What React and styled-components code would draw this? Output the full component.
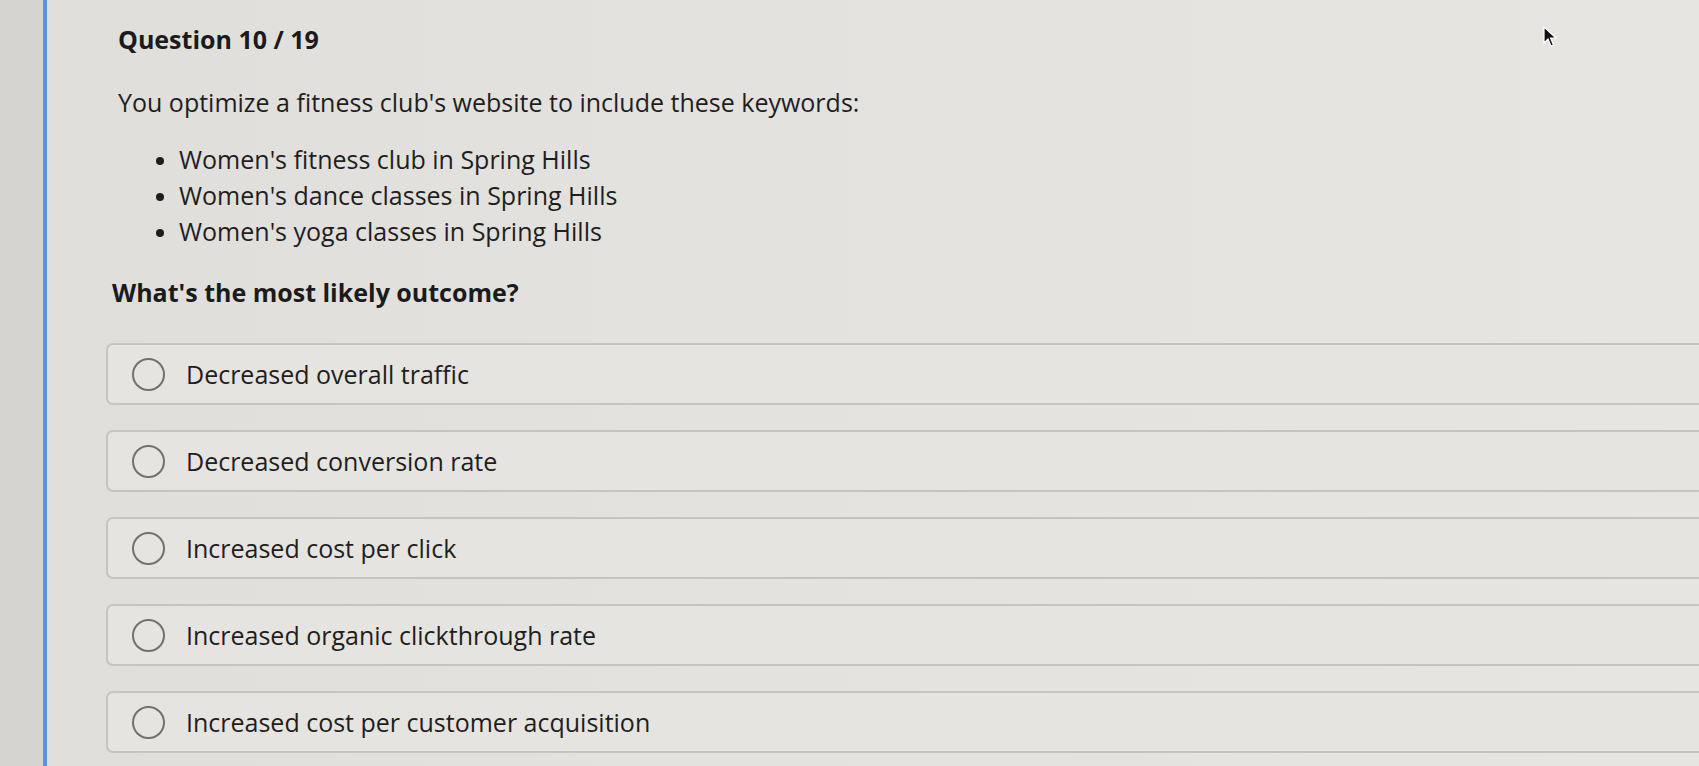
import styled, { createGlobalStyle } from "styled-components";

const GlobalStyle = createGlobalStyle`
  html, body {
    margin: 0;
    padding: 0;
    background: #e3e1dd;
    overflow: hidden;
  }
  body {
    font-family: "Open Sans", "Noto Sans", sans-serif;
    color: #1e1e1e;
  }
`

const Page = styled.div`
  position: relative;
  display: flex;
  width: 1699px;
  height: 766px;
  background: linear-gradient(90deg, #e0deda 0%, #e4e2de 40%, #e7e5e1 100%);
  overflow: hidden;
`

const SideStrip = styled.div`
  width: 43px;
  flex-shrink: 0;
  background: #d6d4d0;
  border-right: 4px solid #6190d4;
`

const Content = styled.main`
  flex: 1;
  padding: 22px 0 0 71px;
`

const Title = styled.h1`
  margin: 0;
  font-size: 25px;
  line-height: 34px;
  font-weight: 700;
  color: #1b1b1b;
`

const Prompt = styled.p`
  margin: 29px 0 0 0;
  font-size: 25px;
  line-height: 34px;
  font-weight: 400;
`

const Keywords = styled.ul`
  margin: 22px 0 0 0;
  padding: 0 0 0 61px;
  font-size: 25px;
  line-height: 36px;

  li::marker {
    font-size: 22px;
  }
`

const Ask = styled.p`
  margin: 26px 0 0 -6px;
  font-size: 25px;
  line-height: 34px;
  font-weight: 700;
  color: #1b1b1b;
`

const Options = styled.div`
  display: flex;
  flex-direction: column;
  gap: 25px;
  margin: 34px -40px 0 -12px;
`

const Option = styled.label`
  display: flex;
  align-items: center;
  gap: 21px;
  box-sizing: border-box;
  height: 62px;
  padding-left: 24px;
  border: 2px solid #c6c4c0;
  border-radius: 7px;
  background: #e6e4e0;
  font-size: 25px;
  cursor: pointer;
`

const Radio = styled.span`
  width: 33px;
  height: 33px;
  box-sizing: border-box;
  border-radius: 50%;
  border: 2px solid #727170;
  flex-shrink: 0;
`

const Cursor = styled.svg`
  position: absolute;
  left: 1543px;
  top: 26px;
`

const choices = [
    "Decreased overall traffic",
    "Decreased conversion rate",
    "Increased cost per click",
    "Increased organic clickthrough rate",
    "Increased cost per customer acquisition",
]

const App = () => {
    return (
        <Page>
            <GlobalStyle />
            <SideStrip />
            <Content>
                <Title>Question 10 / 19</Title>
                <Prompt>You optimize a fitness club's website to include these keywords:</Prompt>
                <Keywords>
                    <li>Women's fitness club in Spring Hills</li>
                    <li>Women's dance classes in Spring Hills</li>
                    <li>Women's yoga classes in Spring Hills</li>
                </Keywords>
                <Ask>What's the most likely outcome?</Ask>
                <Options>
                    {choices.map((c) => (
                        <Option key={c}>
                            <Radio />
                            {c}
                        </Option>
                    ))}
                </Options>
            </Content>
            <Cursor width="16" height="22" viewBox="0 0 16 22">
                <path d="M1 1 L1 17 L5 13 L8 20 L10.5 19 L7.5 12 L13 12 Z" fill="#111" stroke="#fff" strokeWidth="1.2" />
            </Cursor>
        </Page>
    )
}

export default App;
